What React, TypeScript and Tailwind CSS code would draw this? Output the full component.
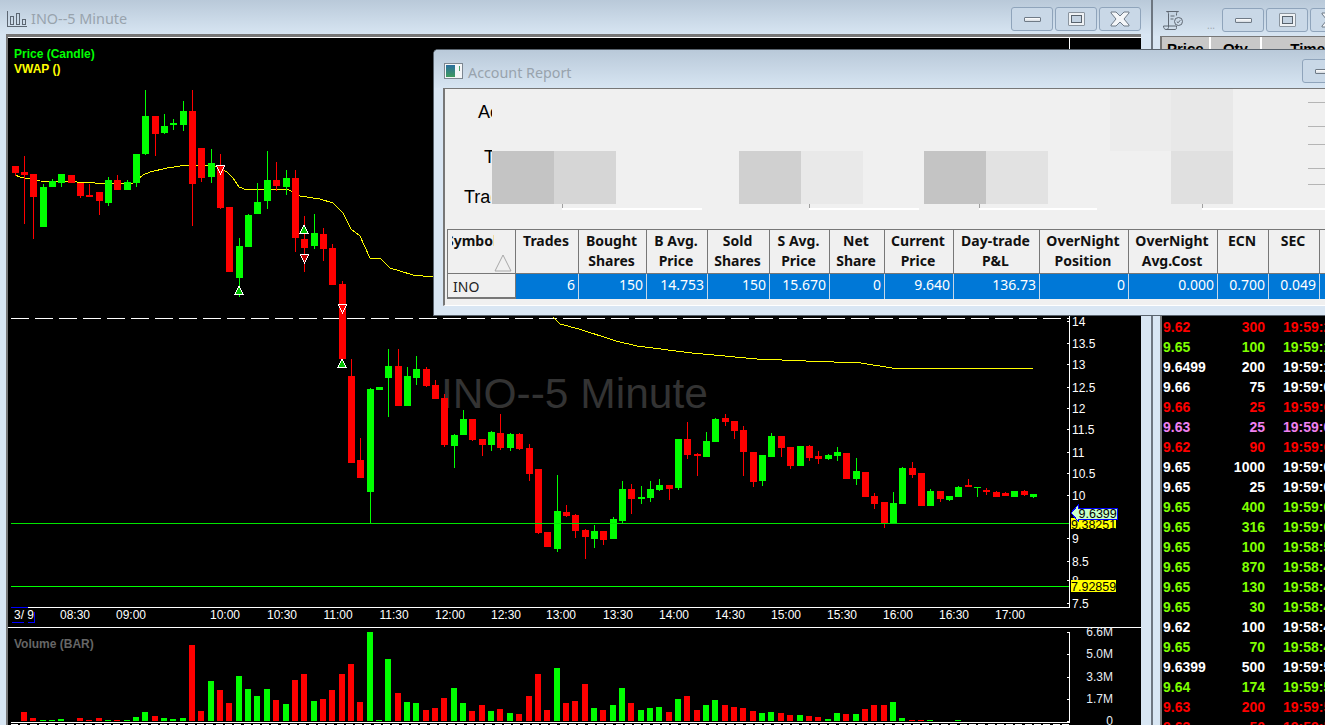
import type { ReactNode } from "react"

// cx, bodyTop, bodyBottom, wickTop, wickBottom, up
type Candle = [number, number, number, number, number, 0 | 1]

const CANDLES: Candle[] = [
  [15.5, 166, 173, 166, 176, 0], [24.5, 172, 175, 156, 224, 0], [33.5, 174, 197, 174, 239, 0], [43.5, 187, 227, 184, 227, 1],
  [52.5, 181, 187, 179, 187, 1], [61.5, 174, 183, 174, 187, 1], [71.5, 175, 183, 175, 183, 0], [80.5, 183, 196, 183, 198, 0],
  [89.5, 195, 197, 184, 197, 0], [99.5, 192, 201, 192, 215, 0], [108.5, 180, 203, 177, 206, 1], [117.5, 180, 190, 175, 190, 0],
  [127.5, 182, 190, 180, 190, 1], [136.5, 154, 183, 154, 187, 1], [145.5, 116, 154, 90, 155, 1], [155.5, 116, 134, 116, 156, 0],
  [164.5, 126, 133, 114, 134, 1], [173.5, 123, 125, 119, 130, 1], [183.5, 111, 125, 101, 131, 1], [192.5, 111, 184, 90, 226, 0],
  [201.5, 148, 178, 148, 182, 0], [211.5, 163, 177, 149, 183, 1], [220.5, 165, 208, 154, 209, 0], [229.5, 207, 272, 207, 272, 0],
  [239.5, 246, 278, 238, 297, 1], [248.5, 215, 247, 214, 247, 1], [257.5, 202, 214, 183, 214, 1], [267.5, 180, 201, 151, 209, 1],
  [276.5, 180, 186, 162, 191, 0], [286.5, 178, 187, 170, 195, 1], [295.5, 178, 238, 170, 252, 0], [304.5, 239, 248, 216, 272, 0],
  [314.5, 233, 246, 214, 249, 1], [323.5, 234, 249, 228, 261, 0], [332.5, 248, 285, 244, 285, 0], [342.5, 284, 359, 281, 359, 0],
  [351.5, 376, 463, 359, 463, 0], [360.5, 460, 478, 438, 478, 0], [370.5, 389, 492, 388, 523, 1], [379.5, 387, 390, 387, 390, 1],
  [388.5, 366, 378, 349, 417, 1], [398.5, 366, 406, 349, 406, 0], [407.5, 376, 406, 367, 406, 1], [416.5, 369, 378, 356, 385, 1],
  [426.5, 369, 386, 367, 387, 0], [435.5, 385, 399, 380, 399, 0], [444.5, 398, 445, 394, 447, 0], [454.5, 435, 446, 434, 468, 1],
  [463.5, 419, 435, 410, 435, 1], [472.5, 419, 440, 419, 441, 0], [482.5, 439, 445, 439, 456, 0], [491.5, 432, 445, 431, 451, 1],
  [500.5, 433, 448, 414, 450, 0], [510.5, 434, 448, 433, 451, 1], [519.5, 434, 449, 433, 450, 0], [529.5, 448, 474, 444, 481, 0],
  [538.5, 469, 533, 469, 534, 0], [547.5, 532, 547, 532, 547, 0], [557.5, 511, 549, 475, 552, 1], [566.5, 512, 516, 505, 517, 0],
  [575.5, 515, 531, 514, 538, 0], [585.5, 530, 537, 529, 559, 0], [594.5, 531, 539, 525, 548, 1], [603.5, 531, 540, 531, 545, 0],
  [613.5, 519, 539, 517, 539, 1], [622.5, 489, 521, 481, 523, 1], [631.5, 489, 499, 484, 514, 0], [641.5, 497, 499, 486, 504, 1],
  [650.5, 489, 498, 481, 502, 1], [659.5, 485, 490, 479, 491, 1], [669.5, 485, 489, 485, 500, 0], [678.5, 439, 488, 439, 490, 1],
  [687.5, 439, 455, 422, 459, 0], [697.5, 454, 456, 453, 476, 0], [706.5, 441, 457, 432, 457, 1], [715.5, 419, 442, 418, 442, 1],
  [725.5, 418, 422, 414, 426, 0], [734.5, 421, 431, 421, 439, 0], [743.5, 430, 452, 426, 476, 0], [753.5, 452, 482, 452, 487, 0],
  [762.5, 455, 481, 455, 486, 1], [771.5, 436, 457, 433, 457, 1], [781.5, 436, 448, 436, 457, 0], [790.5, 447, 466, 447, 469, 0],
  [800.5, 446, 466, 446, 466, 1], [809.5, 446, 458, 445, 461, 0], [818.5, 456, 459, 451, 464, 0], [828.5, 455, 459, 454, 460, 1],
  [837.5, 452, 456, 447, 461, 1], [846.5, 453, 479, 453, 479, 0], [856.5, 471, 479, 458, 485, 1], [865.5, 472, 497, 472, 497, 0],
  [874.5, 496, 504, 493, 509, 0], [884.5, 502, 524, 502, 528, 0], [893.5, 503, 524, 492, 524, 1], [902.5, 468, 504, 467, 504, 1],
  [912.5, 468, 475, 462, 478, 0], [921.5, 473, 506, 473, 506, 0], [930.5, 491, 506, 489, 506, 1], [940.5, 491, 499, 491, 502, 0],
  [949.5, 496, 500, 496, 501, 1], [958.5, 487, 497, 486, 497, 1], [968.5, 485, 487, 479, 487, 0], [977.5, 487, 488, 487, 497, 1],
  [986.5, 490, 492, 488, 495, 0], [996.5, 492, 497, 491, 497, 0], [1005.5, 493, 496, 492, 496, 0], [1014.5, 491, 497, 491, 497, 1],
  [1024.5, 491, 495, 490, 496, 0], [1033.5, 494, 497, 494, 498, 1],
]

// x, top, up
const VOLUME: [number, number, 0 | 1][] = [
  [24, 712, 0], [33, 718, 0], [43, 720, 1], [52, 720, 1], [61, 719, 1], [80, 718, 0], [89, 720, 0], [99, 718, 0], [108, 720, 1],
  [117, 720, 0], [127, 720, 1], [136, 717, 1], [145, 712, 1], [155, 716, 0], [164, 718, 1], [173, 719, 1], [183, 718, 1],
  [192, 645, 0], [201, 711, 0], [211, 681, 1], [220, 690, 0], [229, 703, 0], [239, 676, 1], [248, 689, 1], [257, 696, 1],
  [267, 689, 1], [276, 700, 0], [286, 704, 1], [295, 680, 0], [304, 674, 0], [314, 701, 1], [323, 699, 0], [332, 690, 0],
  [342, 674, 0], [351, 664, 0], [360, 702, 0], [370, 632, 1], [379, 720, 1], [388, 659, 1], [398, 693, 0], [407, 702, 1],
  [416, 703, 1], [426, 710, 0], [435, 708, 0], [444, 698, 0], [454, 688, 1], [463, 703, 1], [472, 711, 0], [482, 705, 0],
  [491, 711, 1], [500, 709, 0], [510, 713, 1], [519, 714, 0], [529, 696, 0], [538, 674, 0], [547, 710, 0], [557, 668, 1],
  [566, 703, 0], [575, 701, 0], [585, 684, 0], [594, 708, 1], [603, 710, 0], [613, 705, 1], [622, 688, 1], [631, 703, 0],
  [641, 710, 1], [650, 708, 1], [659, 707, 1], [669, 712, 0], [678, 699, 1], [687, 696, 0], [697, 710, 0], [706, 705, 1],
  [715, 700, 1], [725, 705, 0], [734, 707, 0], [743, 708, 0], [753, 711, 0], [762, 713, 1], [771, 712, 1], [781, 713, 0],
  [790, 715, 0], [800, 715, 1], [809, 716, 0], [818, 717, 0], [828, 719, 1], [837, 713, 1], [846, 714, 0], [856, 714, 1],
  [865, 709, 0], [874, 705, 0], [884, 705, 0], [893, 702, 1], [902, 718, 1], [912, 720, 0], [921, 720, 0], [930, 720, 1], [958, 720, 1],
]

const VWAP_A =
  "15,175 20,177 40,181 77,182 95,183 133,183 143,175 150,172 167,168 187,165 213,165 227,172 233,178 239,187 247,190 287,189 300,196 320,199 333,203 343,213 351,229 360,236 370,258 380,258 390,268 413,275 433,277"
const VWAP_B = "553,317 560,324 579,329 616,341 637,346 692,353 757,359 806,361 861,363 892,368 1033,368"

const PRICE_LABELS: [string, number][] = [
  ["14", 321], ["13.5", 343], ["13", 364], ["12.5", 387], ["12", 408], ["11.5", 429], ["11", 452], ["10.5", 473], ["10", 495],
  ["9", 538], ["8.5", 561], ["8", 580], ["7.5", 603],
]

const TIME_LABELS: [string, number][] = [
  ["08:30", 75], ["09:00", 131], ["10:00", 225], ["10:30", 282], ["11:00", 338], ["11:30", 394], ["12:00", 450], ["12:30", 506],
  ["13:00", 561], ["13:30", 618], ["14:00", 674], ["14:30", 730], ["15:00", 786], ["15:30", 842], ["16:00", 898], ["16:30", 954], ["17:00", 1010],
]

const VOLUME_LABELS: [string, number][] = [["6.6M", 632], ["5.0M", 654], ["3.3M", 677], ["1.7M", 699], ["0", 721]]

const RED = "text-[#ff0000]"
const GREEN = "text-[#7fff00]"
const WHITE = "text-white"
const PINK = "text-[#f080f0]"

const TAPE: [string, string, string, string][] = [
  ["9.62", "300", "19:59:21", RED], ["9.65", "100", "19:59:18", GREEN], ["9.6499", "200", "19:59:16", WHITE], ["9.66", "75", "19:59:08", WHITE],
  ["9.66", "25", "19:59:08", RED], ["9.63", "25", "19:59:07", PINK], ["9.62", "90", "19:59:06", RED], ["9.65", "1000", "19:59:05", WHITE],
  ["9.65", "25", "19:59:04", WHITE], ["9.65", "400", "19:59:03", GREEN], ["9.65", "316", "19:59:01", GREEN], ["9.65", "100", "19:58:59", GREEN],
  ["9.65", "870", "19:58:49", GREEN], ["9.65", "130", "19:58:47", GREEN], ["9.65", "30", "19:58:45", GREEN], ["9.62", "100", "19:58:43", WHITE],
  ["9.65", "70", "19:58:41", GREEN], ["9.6399", "500", "19:59:59", WHITE], ["9.64", "174", "19:59:58", GREEN], ["9.63", "200", "19:59:57", RED],
  ["9.63", "50", "19:59:56", RED],
]

const HEADERS: string[][] = [
  ["Trades"], ["Bought", "Shares"], ["B Avg.", "Price"], ["Sold", "Shares"], ["S Avg.", "Price"], ["Net", "Share"],
  ["Current", "Price"], ["Day-trade", "P&L"], ["OverNight", "Position"], ["OverNight", "Avg.Cost"], ["ECN"], ["SEC"],
]
const VALUES = ["6", "150", "14.753", "150", "15.670", "0", "9.640", "136.73", "0", "0.000", "0.700", "0.049"]

const TABLE_COLS = "grid grid-cols-[68px_63px_68px_61px_62px_60px_55px_69px_86px_89px_89px_51px_51px_6px]"

function WinButton({ children }: { children: ReactNode }) {
  return (
    <div className="flex h-6 w-[42px] shrink-0 items-center justify-center rounded-[3px] border border-[#8fa4bb] bg-[#c9d8e7]">
      {children}
    </div>
  )
}

const MinGlyph = () => <div className="h-[5px] w-[17px] rounded-[1px] border border-[#6f7a86] bg-linear-to-b from-white to-[#d5dbe2]" />
const MaxGlyph = () => (
  <div className="h-[14px] w-[17px] rounded-[1px] border border-[#8a949e] bg-[#eef1f4] p-[2px]">
    <div className="h-full w-full border border-[#59636d] bg-[#c3d2e1]" />
  </div>
)
const CloseGlyph = () => (
  <svg width="20" height="16" viewBox="0 0 20 16">
    <path d="M1 1h5l4 4 4-4h5v1l-5 6 5 6v1h-5l-4-4-4 4H1v-1l5-6-5-6z" fill="#f4f6f8" stroke="#6f7a86" />
  </svg>
)

function ChartIcon() {
  return (
    <svg width="20" height="18" viewBox="0 0 20 18" fill="none" stroke="#5c6672" shapeRendering="crispEdges" className="shrink-0">
      <path d="M0.5 1v15.5H19.5" />
      <rect x="3.5" y="6.5" width="3" height="8" />
      <rect x="9.5" y="3.5" width="3" height="11" />
      <rect x="15.5" y="9.5" width="3" height="5" />
    </svg>
  )
}

function AccountIcon() {
  return (
    <svg width="19" height="16" viewBox="0 0 19 16" className="shrink-0">
      <defs>
        <linearGradient id="acct" x1="0" y1="0" x2="0" y2="1">
          <stop offset="0" stopColor="#2b6f9f" />
          <stop offset="1" stopColor="#3f9a5e" />
        </linearGradient>
      </defs>
      <rect x="0.5" y="0.5" width="18" height="15" fill="#f4f6f8" stroke="#7d8791" />
      <rect x="2" y="2" width="9" height="12" fill="url(#acct)" />
      <rect x="15" y="3" width="1" height="5" fill="#4aa06a" />
    </svg>
  )
}

function ScrollIcon() {
  return (
    <svg width="21" height="21" viewBox="0 0 21 21" fill="none" stroke="#5f6873" className="shrink-0">
      <path d="M3.5 1.5h12c-1.5 0-2 1-2 2v2M3.5 1.5c1.5 0 2 1 2 2v12.5M5.5 16v1.5c0 1-1 2-2.5 2h9c1 0 1.5-.5 1.5-2v-1.5H.5c0 2 1 3.5 2.5 3.5" />
      <path d="M7.5 6h4M7.5 9h3" />
      <circle cx="15.5" cy="11.5" r="4" />
      <path d="M13.8 11.6l1.3 1.2 2.2-2.6" />
    </svg>
  )
}

function Groove({ className }: { className: string }) {
  return (
    <div className={`relative bg-white ${className}`}>
      <div className="absolute bottom-full left-0 h-[4px] w-px bg-[#a0a0a0]" />
    </div>
  )
}

function Chart() {
  return (
    <svg viewBox="8 38 1133 687" className="block h-[687px] w-[1133px]" fontFamily="'Liberation Sans', Arial, sans-serif" shapeRendering="crispEdges">
      <text x="14" y="58" fill="#00ff00" fontSize="12" fontWeight="700">Price (Candle)</text>
      <text x="14" y="73" fill="#ffff00" fontSize="12" fontWeight="700">VWAP ()</text>
      <text x="441" y="408" fill="#333333" fontSize="42.5">INO--5 Minute</text>

      <line x1="11" y1="318.5" x2="1069" y2="318.5" stroke="#fff" strokeDasharray="18 6" />
      <polyline points={VWAP_A} fill="none" stroke="#ffff00" />
      <polyline points={VWAP_B} fill="none" stroke="#ffff00" />

      {CANDLES.map(([cx, top, bottom, wickTop, wickBottom, up]) => {
        const left = Math.round(cx - 3.5)
        const fill = up ? "#00ff00" : "#ff0000"
        return (
          <g key={cx} fill={fill}>
            <rect x={left + 3} y={wickTop} width="1" height={wickBottom - wickTop} />
            <rect x={left} y={top} width="7" height={bottom - top} />
          </g>
        )
      })}

      <line x1="11" y1="523.5" x2="1069" y2="523.5" stroke="#00e600" />
      <line x1="11" y1="586.5" x2="1069" y2="586.5" stroke="#00ff00" />

      <g stroke="#fff" strokeWidth="1">
        <polygon points="216,165 225,165 220.5,174" fill="#ff0000" />
        <polygon points="235,294 243,294 239,286" fill="#00c000" />
        <polygon points="300,233 308,233 304,225" fill="#00c000" />
        <polygon points="300,254 309,254 304.5,263" fill="#c00000" />
        <polygon points="338,304 347,304 342.5,313" fill="#ff0000" />
        <polygon points="338,367 346,367 342,359" fill="#00c000" />
      </g>

      {/* axes */}
      <line x1="1069.5" y1="38" x2="1069.5" y2="607" stroke="#fff" />
      <line x1="11" y1="607.5" x2="1070" y2="607.5" stroke="#fff" />
      <line x1="8" y1="627.5" x2="1141" y2="627.5" stroke="#fff" />
      <line x1="1069.5" y1="632" x2="1069.5" y2="722" stroke="#fff" />
      <line x1="11" y1="722.5" x2="1070" y2="722.5" stroke="#fff" />
      {Array.from({ length: 114 }, (_, i) => (
        <rect key={i} x={11 + Math.round(i * 9.3)} y="724" width="7" height="1" fill="#fff" />
      ))}

      {PRICE_LABELS.map(([label, y]) => (
        <g key={label}>
          <rect x="1067" y={y} width="2" height="1" fill="#fff" />
          <text x="1072" y={y + 5} fill="#fff" fontSize="12">{label}</text>
        </g>
      ))}

      {VOLUME_LABELS.map(([label, y]) => (
        <g key={label}>
          <rect x="1067" y={y} width="2" height="1" fill="#fff" />
          <text x="1113" y={y + 4} fill="#e8eef4" fontSize="12" textAnchor="end">{label}</text>
        </g>
      ))}

      <rect x="1071" y="518" width="45" height="11" fill="#ffff00" />
      <text x="1071" y="529" fill="#000" fontSize="12.5">9.38251</text>
      <polygon points="1071,513 1078,505 1078,508 1117,508 1117,519 1078,519 1078,521" fill="#c8ffc8" stroke="#0000ff" />
      <text x="1078.5" y="518" fill="#000" fontSize="12.5">9.6399</text>
      <rect x="1071" y="580" width="45" height="12" fill="#ffff00" />
      <text x="1071" y="591" fill="#000" fontSize="12.5">7.92859</text>

      <path d="M11 607.5h17M12 622.5h12M34.5 612v11M28 622.5h7" stroke="#0000ff" fill="none" />
      <text x="14" y="619" fill="#fff" fontSize="12">3/ 9</text>
      {TIME_LABELS.map(([label, x]) => (
        <text key={label} x={x} y="619" fill="#fff" fontSize="12" textAnchor="middle">{label}</text>
      ))}

      <text x="14" y="648" fill="#666666" fontSize="12" fontWeight="700">Volume (BAR)</text>
      {VOLUME.map(([x, top, up]) => (
        <rect key={x} x={x - 3} y={top} width="6" height={721 - top} fill={up ? "#00ff00" : "#ff0000"} />
      ))}
    </svg>
  )
}

function AccountReport() {
  return (
    <div className="absolute left-[433px] top-[49px] flex h-[267px] w-[892px] flex-col overflow-hidden rounded-tl-[5px] border-l border-t border-b border-[#59636d] bg-[#d9e6f3]">
      <div className="flex h-[38px] shrink-0 items-center bg-linear-to-b from-[#b9c9d9] to-[#d7e5f2] pl-[10px] pt-[4px]">
        <AccountIcon />
        <div className="ml-[5px] w-[834px] shrink-0 pt-[3px] font-['Noto_Sans',sans-serif] text-[14.3px] text-[#98a3ad]">Account Report</div>
        <WinButton><MinGlyph /></WinButton>
      </div>

      <div className="relative ml-[9px] h-[218px] border-l-2 border-t border-b border-[#777777] border-b-white bg-[#f0f0f0] font-['Liberation_Sans',sans-serif] text-black">
        {/* redacted blocks */}
        <div className="absolute left-[47px] top-[62px] flex h-[53px]">
          <div className="w-[62px] bg-[#c4c4c4]" />
          <div className="w-[62px] bg-[#d6d6d6]" />
        </div>
        <div className="absolute left-[294px] top-[62px] flex h-[53px]">
          <div className="w-[62px] bg-[#d0d0d0]" />
          <div className="w-[62px] bg-[#e9e9e9]" />
        </div>
        <div className="absolute left-[479px] top-[62px] flex h-[53px]">
          <div className="w-[62px] bg-[#c4c4c4]" />
          <div className="w-[62px] bg-[#e2e2e2]" />
        </div>
        <div className="absolute left-[665px] top-0 flex h-[62px]">
          <div className="w-[61px] bg-[#ececec]" />
          <div className="w-[62px] bg-[#e8e8e8]" />
        </div>
        <div className="absolute left-[726px] top-[62px] h-[53px] w-[62px] bg-[#e0e0e0]" />

        <div className="absolute right-0 top-0 flex h-[100px] w-[17px] flex-col">
          <div className="mt-[13px] h-px bg-[#b5b5b5]" />
          <div className="mt-[23px] h-px bg-[#b5b5b5]" />
          <div className="mt-[17px] h-px bg-[#b5b5b5]" />
          <div className="mt-[23px] h-px bg-[#b5b5b5]" />
          <div className="mt-[15px] h-px bg-[#b5b5b5]" />
        </div>

        <div className="mt-[14px] h-[18px] w-[47px] overflow-hidden whitespace-nowrap pl-[33px] text-[18px] leading-[18px]">Account</div>
        <div className="mt-[27px] h-[18px] w-[47px] overflow-hidden whitespace-nowrap pl-[39px] text-[18px] leading-[18px]">Total</div>
        <div className="mt-[22px] h-[18px] w-[46px] overflow-hidden whitespace-nowrap pl-[19px] text-[18px] leading-[18px]">Trades</div>

        <div className="mt-[2px] flex h-[2px]">
          <Groove className="ml-[117px] w-[140px]" />
          <Groove className="ml-[107px] w-[110px]" />
          <Groove className="ml-[60px] w-[118px]" />
          <Groove className="ml-[105px] flex-1" />
        </div>

        <div className={`${TABLE_COLS} ml-[2px] mt-[19px] border-t border-l border-[#777777] font-['Noto_Sans',sans-serif] text-[14px]`}>
          <div className="relative h-[44px] border-b border-r border-[#777777] pl-[4px] pt-px font-bold leading-5 text-[#111]">
            <div className="w-[42px] overflow-hidden whitespace-nowrap [text-indent:-6px]">Symbol</div>
            <svg width="18" height="18" viewBox="0 0 18 18" className="absolute left-[46px] top-[24px]">
              <path d="M9 1L17 17H1z" fill="none" stroke="#a8a8a8" />
            </svg>
          </div>
          {HEADERS.map((lines) => (
            <div key={lines.join()} className="h-[44px] border-b border-r border-[#777777] pr-[2px] pt-px text-center font-bold leading-5 text-[#111]">
              {lines.map((line) => (
                <div key={line}>{line}</div>
              ))}
            </div>
          ))}
          <div className="h-[44px] border-b border-[#777777]" />

          <div className="h-[25px] border-b-2 border-r border-[#777777] pl-[5px] pt-[1px] leading-[24px] text-[#222]">INO</div>
          {VALUES.map((value, i) => (
            <div key={i} className="h-[25px] border-r border-[#c6d6e6] bg-[#0078d7] pr-[3px] text-right leading-[22px] text-white">
              {value}
            </div>
          ))}
          <div className="h-[25px] bg-[#0078d7]" />
        </div>
      </div>
    </div>
  )
}

export default function App() {
  return (
    <div className="relative h-[725px] w-[1325px] overflow-hidden bg-[#d8e6f3]">
      {/* chart window */}
      <div className="absolute left-0 top-0 flex h-[725px] w-[1151px] flex-col">
        <div className="flex h-[34px] shrink-0 items-center gap-[4px] bg-linear-to-b from-[#b9c9d9] to-[#d7e5f2] pl-[7px] pr-[10px] pt-[4px]">
          <ChartIcon />
          <div className="font-['Noto_Sans',sans-serif] text-[14.4px] text-[#98a3ad]">INO--5 Minute</div>
          <div className="ml-auto flex gap-[2px]">
            <WinButton><MinGlyph /></WinButton>
            <WinButton><MaxGlyph /></WinButton>
            <WinButton><CloseGlyph /></WinButton>
          </div>
        </div>
        <div className="ml-[6px] w-[1135px] flex-1 border-l-2 border-t-[3px] border-[#777777]">
          <div className="border-t border-white bg-black">
            <Chart />
          </div>
        </div>
      </div>

      {/* time and sales window */}
      <div className="absolute left-[1151px] top-0 flex h-[725px] w-[174px] flex-col overflow-hidden border-l-2 border-[#6d7680]">
        <div className="flex h-[36px] shrink-0 items-center bg-linear-to-b from-[#b9c9d9] to-[#d7e5f2] pl-[10px] pt-[4px]">
          <ScrollIcon />
          <div className="ml-[23px] mt-[10px] w-[15px] shrink-0 text-[10px] leading-none text-[#a0a8b0]">...</div>
          <div className="flex gap-[2px]">
            <WinButton><MinGlyph /></WinButton>
            <WinButton><MaxGlyph /></WinButton>
            <WinButton><CloseGlyph /></WinButton>
          </div>
        </div>
        <div className="ml-[7px] flex-1 border-l-2 border-t border-[#777777] bg-black font-['Liberation_Sans',sans-serif]">
          <div className="flex h-[20px] bg-[#c8c8c8] text-[15px] font-bold text-black">
            <div className="w-[50px] border-r-2 border-white text-center leading-[24px]">Price</div>
            <div className="w-[53px] border-r-2 border-white text-center leading-[24px]">Qty</div>
            <div className="flex-1 pl-[28px] leading-[24px]">Time</div>
          </div>
          <div className="mt-[260px]">
            {TAPE.map(([price, qty, time, color], i) => (
              <div key={i} className={`flex h-5 whitespace-nowrap text-[14px] font-bold leading-5 ${color}`}>
                <div className="w-[61px] shrink-0 pl-[1px]">{price}</div>
                <div className="w-[42px] shrink-0 text-right">{qty}</div>
                <div className="ml-[18px] shrink-0">{time}</div>
              </div>
            ))}
          </div>
        </div>
      </div>

      <AccountReport />
    </div>
  )
}
